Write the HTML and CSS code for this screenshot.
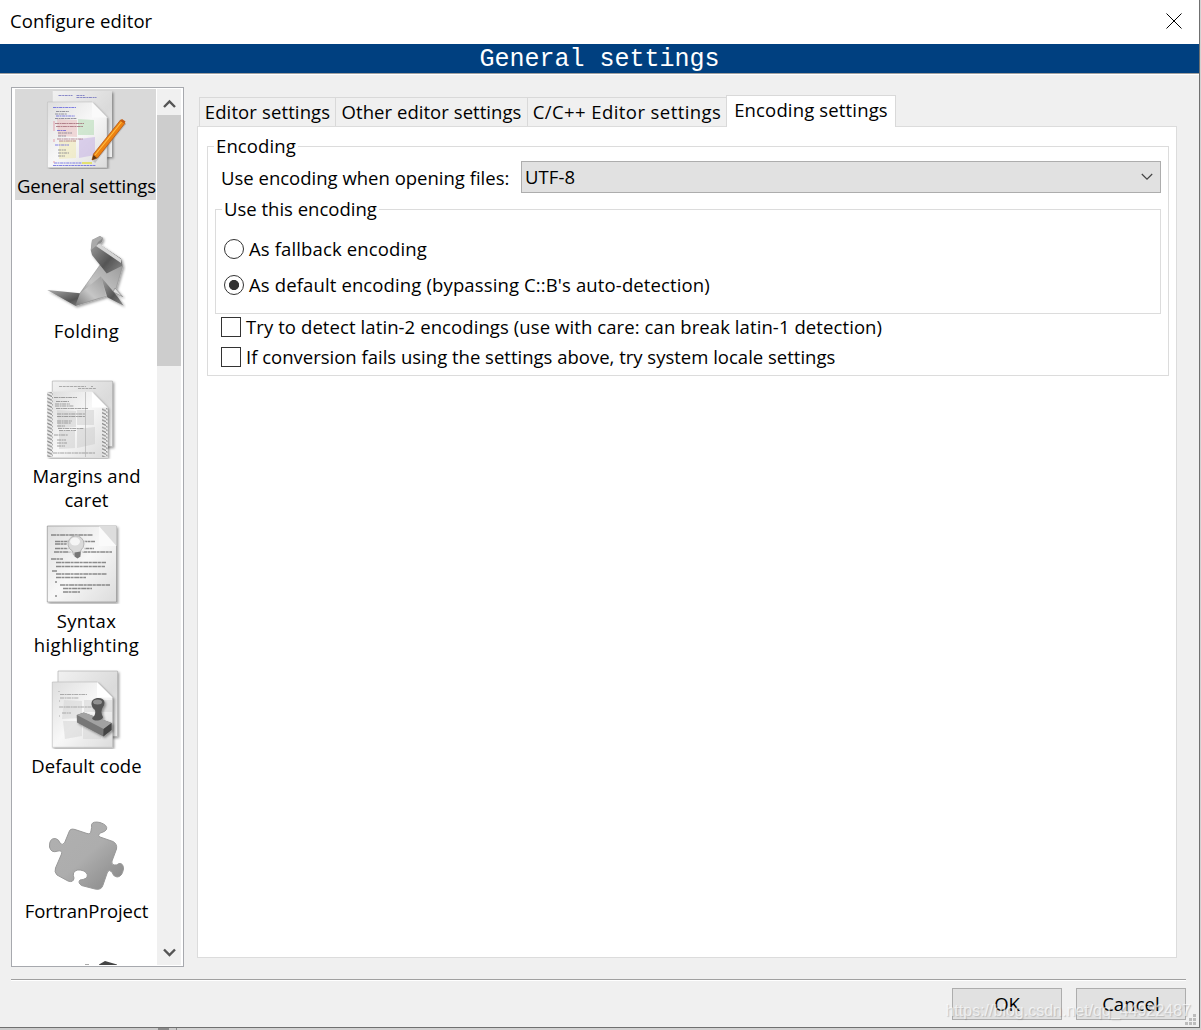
FILE: index.html
```html
<!DOCTYPE html>
<html lang="en">
<head>
<meta charset="utf-8">
<title>Configure editor</title>
<link rel="stylesheet" href="styles.css">
</head>
<body>
<svg class="defs" width="0" height="0" aria-hidden="true">
  <defs>
    <linearGradient id="paper" x1="0" y1="0" x2="1" y2="1"><stop offset="0" stop-color="#dedede"/><stop offset=".5" stop-color="#f8f8f8"/><stop offset="1" stop-color="#dcdcdc"/></linearGradient>
    <linearGradient id="back" x1="0" y1="0" x2="1" y2="1"><stop offset="0" stop-color="#f1f1f1"/><stop offset=".6" stop-color="#dadada"/><stop offset="1" stop-color="#eeeeee"/></linearGradient>
    <linearGradient id="dark" x1="0" y1="0" x2="1" y2="1"><stop offset="0" stop-color="#a8a8a8"/><stop offset=".6" stop-color="#555"/><stop offset="1" stop-color="#888"/></linearGradient>
    <linearGradient id="mid" x1="0" y1="1" x2="1" y2="0"><stop offset="0" stop-color="#777"/><stop offset=".45" stop-color="#c6c6c6"/><stop offset="1" stop-color="#9a9a9a"/></linearGradient>
    <linearGradient id="puzzle" x1="0" y1="0" x2="1" y2="1"><stop offset="0" stop-color="#b0b0b0"/><stop offset=".5" stop-color="#adadad"/><stop offset="1" stop-color="#858585"/></linearGradient>
    <pattern id="hatch" width="6" height="3.6" patternUnits="userSpaceOnUse"><rect width="6" height="3.6" fill="#ececec"/><path d="M0 .4 6 3.2" stroke="#8c8c8c" stroke-width="1.3"/></pattern>
    <filter id="shadow" x="-10%" y="-10%" width="125%" height="125%"><feDropShadow dx="1.5" dy="1.5" stdDeviation="1" flood-color="#000" flood-opacity=".38"/></filter>
    <filter id="soft"><feGaussianBlur stdDeviation=".5"/></filter>
  </defs>
</svg>

<div class="window">
  <header class="titlebar">
    <span class="title">Configure editor</span>
    <svg class="close" width="16" height="16" viewBox="0 0 16 16"><path d="M.5.5l15 15M15.5.5l-15 15" stroke="#000" stroke-width="1"/></svg>
  </header>
  <div class="banner"><span>General settings</span></div>

  <main class="content">
    <aside class="sidebar">
      <ul class="pages">
        <li class="page selected">
          <svg width="80" height="80" viewBox="0 0 80 80">
            <path d="M6.700 2H66V68H6.700z" fill="url(#back)" filter="url(#shadow)"/>
            <path class="code" d="M12.500 6.500h14m4 0h8m-8 2h20" stroke="#5555b5" stroke-width="1" stroke-dasharray="3 .7 2 .5" filter="url(#soft)"/>
            <path d="M1.500 13H46l15 15.500V78.500H1.500z" fill="url(#paper)" filter="url(#shadow)"/>
            <path d="M1.500 13H46l15 15.500V78.500H1.500z" fill="url(#paper)" stroke="#bbb" stroke-width=".5"/>
            <path d="M11 30l20 1v17l-19-1z" fill="#e8b8b8" opacity=".5"/><path d="M32 30l16 1v15H32z" fill="#b8dcb8" opacity=".6"/>
            <path d="M13 52l17-1v18l-17 1z" fill="#eee7b4" opacity=".6"/><path d="M33 50l16-2v18l-16 3z" fill="#cdbde6" opacity=".7"/>
            <path d="M46 13v15.500h15z" fill="#fafafa"/>
            <g class="code" fill="none" stroke-width="1" filter="url(#soft)">
              <path d="M7 18.500h23M10 27h19M11 41.500h9M9 56h14M8 74h38M7 76.500h43" stroke="#4444dd" stroke-dasharray="3 .5 2 .6"/>
              <path d="M10 22.500h13M9 25h12m-12 4.500h22M12 44h14m-14 3h8M12 61h8m-8 3h11m-11 3h7" stroke="#666678" stroke-dasharray="3 .6 2 .5"/>
              <path d="M9 34.500h29M10 37.500h27M11 50h26m-24 2h17" stroke="#965565" stroke-dasharray="4 .5 2 .4"/>
              <path d="M8 32v10m0 8v3m0 19v2" stroke="#dd7788"/><path d="M36 74h10" stroke="#e0dc35" stroke-width="2"/>
            </g>
            <path d="M48 73L79 34" stroke="#888" stroke-width="3" opacity=".35"/>
            <path d="M46 71l1.500-6L74.500 31l4.300 3.500L51.500 69z" fill="#ed8212" stroke="#a84e11" stroke-width=".7"/>
            <path d="M49 66L75.500 33" stroke="#ffc044" stroke-width="1.100"/><path d="M46 71l1.500-5 3.500 3z" fill="#5e3715"/>
            <path d="M74 31.500l2-1.500 3.500 2.500-1 2z" fill="#c65c13"/>
          </svg>
          <span class="tight">General settings</span>
        </li>
        <li class="page">
          <svg width="80" height="80" viewBox="0 0 80 80">
            <g filter="url(#shadow)">
              <path d="M54 31L34 59.300 29.300 71.700 61 62l8-4 7.700-26z" fill="url(#mid)" stroke="#888" stroke-width=".5"/>
              <path d="M69 54l7.700 8.700L67 58z" fill="#ddd" stroke="#888" stroke-width=".7"/>
              <path d="M1.300 56L34 59.300l12-2-16.700 14.400z" fill="url(#dark)"/>
              <path d="M34 59.300l21-17 5 19-30.700 10.400z" fill="url(#mid)"/>
              <path d="M46 6l8-4 3 2-1 4-3 2 22 14.500 1.700 7-16 8L46 21l-1.300-5z" fill="url(#dark)"/>
              <path d="M46 6l8-4 3 2-5 4-2 4-5 4z" fill="#aaa"/><path d="M53 9.500L75 25v4L50 12z" fill="#d5d5d5"/>
              <path d="M55 42.700l17 20.500 5.700 8.500L61.300 63.300z" fill="url(#dark)"/>
            </g>
          </svg>
          <span class="loose">Folding</span>
        </li>
        <li class="page">
          <svg width="80" height="80" viewBox="0 0 80 80">
            <path d="M6.300 2H66.500V67.500H6.300z" fill="url(#back)" stroke="#aaa" stroke-width=".6" filter="url(#shadow)"/>
            <path class="code" d="M13 7.500h27m5 0h2M32 9.500h18" stroke="#888" stroke-dasharray="3 .7" filter="url(#soft)"/>
            <path d="M1.300 12.700H46l15.700 16V78.500H1.300z" fill="#e7e7e7" filter="url(#shadow)"/>
            <path d="M6 12.700H46l11 16V78H6z" fill="url(#paper)"/>
            <path d="M11 31l19 1v16l-18 1zm20 0h17v15H31zM13 52h16v17l-16 1zm18-2l18-2v17l-18 4z" fill="#ccc" opacity=".5"/>
            <path d="M39.500 13v65" stroke="#aaa" stroke-width=".6"/>
            <path d="M1.300 13h5.500v65H1.300zM56 29h5.500v49H56z" fill="url(#hatch)"/>
            <path d="M46 13v15.500h15z" fill="#fff"/>
            <path class="code" d="M8 18.500h23M10 22.500h13M9 25h15m-15 2h19m-18 2.500h32M11 35h28M11 37.500h28M11 42h15m-15 2h14m-14 3h8M12 49.500h26m-25 2h17M8 56h14M11 61h9m-9 3h10m-10 3h8M7 74h42" stroke="#777" stroke-width="1" stroke-dasharray="4 .6 2 .5" filter="url(#soft)"/>
          </svg>
          <span class="snug">Margins and</span><span class="snug">caret</span>
        </li>
        <li class="page">
          <svg width="80" height="80" viewBox="0 0 80 80">
            <path d="M1.300 2H70.500V78H1.300z" fill="url(#paper)" stroke="#888" stroke-width=".6" filter="url(#shadow)"/>
            <path d="M53 2v20H70.500z" fill="#fafafa"/><path d="M53 2l17.500 20V2z" fill="#ddd"/>
            <path class="code" d="M5 11h42M9 17.500h15m12 0h13M9 20h12m-12 4.500h20m9 0h10M8 28h23m5 0h30M5 35h12M10 38.500h50M10 42.500h49M6 47h5M10 50h51M10 53.500h30M14 61h50M17 64.500h29M17 68h17M10 71v2M10 57v2" stroke="#555" stroke-width="1.500" stroke-dasharray="5 .5 3 .6" filter="url(#soft)"/>
            <circle cx="30.300" cy="21.500" r="10" fill="#eee" opacity=".7"/>
            <path d="M27.500 31l-1-4a8 8 0 1 1 8.500-1l-1 5z" fill="#dadada" stroke="#aaa" stroke-width=".8"/><ellipse cx="29" cy="17.500" rx="5" ry="4" fill="#f5f5f5"/>
            <path d="M28.500 28.500l6-1v5l-3 2-3-2z" fill="#777"/>
          </svg>
          <span class="loose">Syntax</span><span class="loose">highlighting</span>
        </li>
        <li class="page">
          <svg width="80" height="80" viewBox="0 0 80 80">
            <path d="M12 2H71.500V67.500H12z" fill="url(#back)" stroke="#aaa" stroke-width=".6" filter="url(#shadow)"/>
            <path d="M6.300 13H51l15.500 15.500V78.300H6.300z" fill="url(#paper)" stroke="#bbb" stroke-width=".6" filter="url(#shadow)"/>
            <path d="M18 31l18 1v17l-20 1zm20 0h28v12H38zM17 52h19v15l-17 3zm20-2l18 4v16H37z" fill="#d6d6d6" opacity=".55"/>
            <path d="M51 13v15.500h15.500z" fill="#fff"/>
            <path class="code" d="M13 22v1m1 2.500h27M14 29h19M13 32h1M13 38h38M16 44h9M13 47h1" stroke="#888" stroke-dasharray="4 .6 2 .5" filter="url(#soft)"/>
            <g filter="url(#shadow)"><path d="M30.700 46l7-2.500L65.700 54v7l-8.400 6.500L31 53.500z" fill="#777"/><path d="M31 46l7-2.500L65.700 54l-8 6z" fill="#a2a2a2"/><path d="M57.500 60l8-6v7l-8.200 6.500z" fill="#444"/>
            <path d="M49 41c-5-4-5-11 2-12 8-1 9 5 6 9-2 3-2 7 0 10 0 4-10 5-11 1 2-1 4-4 3-8z" fill="#555"/><ellipse cx="51.500" cy="33" rx="4.500" ry="2.500" fill="#aaa" opacity=".7"/></g>
          </svg>
          <span class="snug">Default code</span>
        </li>
        <li class="page">
          <svg width="80" height="80" viewBox="0 0 80 80">
            <path d="M29 15.500L41 19.500Q44.500 20.500 45 17Q46 13 45.500 10.500Q47 7 54 8.500Q62 11 60.500 15.500Q59.500 17.500 54.500 19Q51 21.500 54 23L67 27.500Q71.500 30 70.500 35L66 47Q65 50 68 51Q71 51.500 73 49.500Q77.500 49 77.500 55Q76 63 71 63Q67 62.500 66 58Q63 55 61.500 58L57 71Q55.500 76.500 49 75L35.500 71.500Q31.500 68.500 34 66Q37 66 40.500 64Q43 60 38 57Q30 54 27.500 59Q27 62 28 64Q27.500 69 22 67L11 61Q8 58 9.500 54L15.500 40Q16.500 36 12 37Q5 39.500 3.500 33Q3 24 9.500 24.500Q13 25.500 14 29Q16 32 18.500 29L23 18Q24 14 29 15.500z" fill="url(#puzzle)" stroke="#999" stroke-width="1"/>
          </svg>
          <span class="tight">FortranProject</span>
        </li>
        <li class="page">
          <svg width="80" height="80" viewBox="0 0 80 80"><path d="M53 5.500l6-3.500 12 3.500v5H53z" fill="#444"/><path d="M39 5.500h4" stroke="#aaa"/></svg>
        </li>
      </ul>
      <div class="scrollbar">
        <svg width="24" height="26" viewBox="0 0 24 26"><path d="M7 18l5.500-5.500L18 18" fill="none" stroke="#555" stroke-width="2.400"/></svg>
        <div class="thumb"></div>
        <svg class="down" width="24" height="26" viewBox="0 0 24 26"><path d="M7 10.500l5.500 5.500L18 10.500" fill="none" stroke="#555" stroke-width="2.400"/></svg>
      </div>
    </aside>

    <section class="notebook">
      <nav class="tabs">
        <div class="tab t1"><span>Editor settings</span></div>
        <div class="tab t2"><span>Other editor settings</span></div>
        <div class="tab t3"><span>C/C++ Editor settings</span></div>
        <div class="tab active"><span>Encoding settings</span></div>
      </nav>
      <div class="sheet">
        <fieldset class="group outer">
          <legend>Encoding</legend>
          <div class="row">
            <span>Use encoding when opening files:</span>
            <div class="combo"><span class="snug">UTF-8</span><svg width="12" height="8" viewBox="0 0 12 8"><path d="M.8 1L6 6.200 11.200 1" fill="none" stroke="#444" stroke-width="1.200"/></svg></div>
          </div>
          <fieldset class="group inner">
            <legend>Use this encoding</legend>
            <div class="option"><i class="radio"></i><span>As fallback encoding</span></div>
            <div class="option"><i class="radio on"></i><span>As default encoding (bypassing C::B's auto-detection)</span></div>
          </fieldset>
          <div class="check"><i class="box"></i><span class="snug">Try to detect latin-2 encodings (use with care: can break latin-1 detection)</span></div>
          <div class="check"><i class="box"></i><span>If conversion fails using the settings above, try system locale settings</span></div>
        </fieldset>
      </div>
    </section>
  </main>

  <footer class="footer">
    <div class="button"><span>OK</span></div>
    <div class="button"><span class="snug">Cancel</span></div>
  </footer>
  <svg class="grip" width="11" height="11" viewBox="0 0 11 11"><path d="M8 0h3v3H8zM4 4h3v3H4zM8 4h3v3H8zM0 8h3v3H0zM4 8h3v3H4zM8 8h3v3H8z" fill="#bcbcbc"/></svg>
  <div class="watermark">https://blog.csdn.net/qq_44922487</div>
</div>
</body>
</html>
```
FILE: styles.css
```css
* { box-sizing: border-box; }
body {
  margin: 0;
  width: 1201px;
  height: 1030px;
  overflow: hidden;
  background: linear-gradient(90deg, #cbcbcb 158px, #8a8a8a 158px 169px, #cbcbcb 169px 176px, #8a8a8a 176px 177px, #d2d2d2 177px);
  color: #000;
  font: 18.5px/24px "Open Sans", "Noto Sans", sans-serif;
  white-space: nowrap;
}
.defs { position: absolute; }
.tight { letter-spacing: -.06px; }
.snug { letter-spacing: .09px; }
.loose { letter-spacing: .4px; }
.code { opacity: .65; }
.window {
  position: relative;
  display: flex;
  flex-direction: column;
  width: 1200px;
  height: 1028px;
  background: #f0f0f0;
  border-right: 1px solid #707070;
  border-bottom: 1px solid #707070;
}
.titlebar {
  display: flex;
  align-items: center;
  justify-content: space-between;
  height: 44px;
  padding: 0 17px 2px 10px;
  background: #fff;
}
.title { letter-spacing: .09px; }
.close { display: block; }
.banner {
  height: 31px;
  padding-top: 2px;
  background: #004080;
  border-bottom: 1px solid #fff;
  box-shadow: inset 0 -1px #a0a0a0;
  color: #fff;
  font: 25px/28px "Liberation Mono", monospace;
  text-align: center;
}
.content { display: flex; height: 904px; padding: 12px 22px 0 11px; }
.sidebar {
  display: flex;
  width: 173px;
  height: 880px;
  padding: 1px 1px 1px 3px;
  overflow: hidden;
  background: #fff;
  border: 1px solid #a7a9ae;
}
.pages {
  width: 141px;
  height: 876px;
  margin: 0 1px 0 0;
  padding: 0;
  overflow: hidden;
  list-style: none;
}
.page {
  display: flex;
  flex-direction: column;
  align-items: center;
  height: 145px;
  padding-left: 2px;
}
.page svg { flex: none; margin: 0 1px 5px 0; }
.selected { height: 111px; margin-bottom: 34px; background: #d9d9d9; }
.scrollbar {
  display: flex;
  flex-direction: column;
  width: 24px;
  height: 876px;
  background: #f0f0f0;
}
.thumb { height: 251px; background: #cdcdcd; }
.down { margin-top: auto; }
.notebook { width: 980px; margin-left: 13px; padding-top: 8px; }
.tabs { display: flex; align-items: flex-end; height: 31px; padding-left: 2px; }
.tab {
  display: flex;
  align-items: center;
  justify-content: center;
  height: 29px;
  border: 1px solid #d9d9d9;
  border-width: 1px 0 0 1px;
}
.t1 { width: 136px; letter-spacing: .12px; }
.t2 { width: 192px; letter-spacing: .05px; }
.t3 { width: 199px; letter-spacing: .42px; }
.tab.active {
  z-index: 1;
  width: 170px;
  height: 32px;
  margin-bottom: -1px;
  padding: 0 0 3px;
  background: #fff;
  border-right-width: 1px;
  letter-spacing: .15px;
}
.sheet { height: 832px; padding: 7px 7px 0 9px; background: #fff; border: 1px solid #dcdcdc; }
.group { min-width: 0; margin: 0; border: 1px solid #dcdcdc; }
.group legend { height: 24px; padding: 0 2px; }
.outer { height: 242px; padding: 0 7px; }
.outer > legend { margin-left: -1px; letter-spacing: .1px; }
.row { display: flex; align-items: center; height: 38px; padding-left: 6px; }
.row > span { padding-top: 2px; }
.combo {
  display: flex;
  align-items: center;
  justify-content: space-between;
  width: 640px;
  height: 32px;
  margin-left: auto;
  padding: 0 7px 0 3px;
  background: #e1e1e1;
  border: 1px solid #adadad;
}
.inner { height: 117px; margin-top: 1px; padding: 10px 8px 0; }
.inner legend { margin-left: -2px; }
.option { display: flex; align-items: center; height: 36px; letter-spacing: .13px; }
.radio { width: 20px; height: 20px; margin-right: 5px; border: 1px solid #333; border-radius: 50%; }
.radio.on { background: radial-gradient(circle, #333 4.700px, transparent 5.400px); }
.check { display: flex; align-items: center; height: 30px; padding-left: 6px; }
.inner + .check { margin-top: -2px; }
.box { width: 20px; height: 20px; margin-right: 5px; border: 1px solid #333; }
.footer {
  display: flex;
  justify-content: flex-end;
  gap: 14px;
  height: 42px;
  margin: 0 13px 0 11px;
  padding-top: 8px;
  border-top: 1px solid #a0a0a0;
  box-shadow: inset 0 1px #fff;
}
.button {
  display: flex;
  align-items: center;
  justify-content: center;
  width: 110px;
  height: 32px;
  background: #e1e1e1;
  border: 1px solid #adadad;
}
.grip { position: absolute; right: 3px; bottom: 2px; }
.watermark {
  position: absolute;
  right: 8px;
  bottom: 4px;
  color: rgba(255, 255, 255, .65);
  font: 16px/24px "Liberation Sans", sans-serif;
  text-shadow: 1px 1px 1px rgba(100, 100, 100, .3);
}
```
